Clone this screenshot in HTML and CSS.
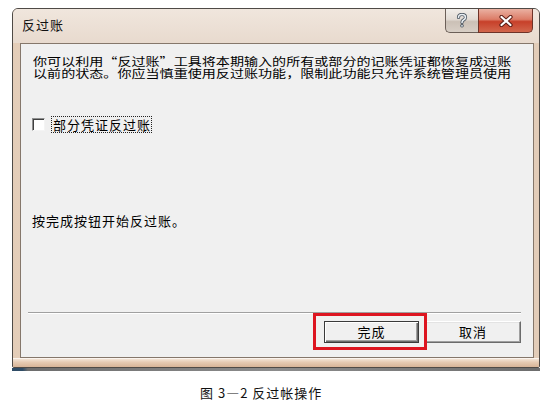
FILE: index.html
```html
<!DOCTYPE html>
<html lang="zh-CN">
<head>
<meta charset="utf-8">
<title>反过账</title>
<link rel="stylesheet" href="styles.css">
</head>
<body>
<div class="window">
  <div class="titlebar">
    <span class="title">反过账</span>
    <div class="caption-buttons">
      <div class="cbtn help">
        <svg width="12" height="15" viewBox="0 0 12 15" aria-hidden="true">
          <path d="M2.5 4.5 Q2.5 1.5 6 1.5 Q9.5 1.5 9.5 4.3 Q9.5 6 7.5 7 Q6 7.8 6 9.5" fill="none" stroke="#4a5560" stroke-width="3.2" stroke-linecap="round"/>
          <path d="M2.5 4.5 Q2.5 1.5 6 1.5 Q9.5 1.5 9.5 4.3 Q9.5 6 7.5 7 Q6 7.8 6 9.5" fill="none" stroke="#e9eef2" stroke-width="1.6" stroke-linecap="round"/>
          <circle cx="6" cy="12.8" r="1.8" fill="#4a5560"/>
          <circle cx="6" cy="12.8" r="0.9" fill="#e9eef2"/>
        </svg>
      </div>
      <div class="cbtn close">
        <svg width="14" height="12" viewBox="0 0 14 12" aria-hidden="true">
          <path d="M2.5 2 L11.5 10 M11.5 2 L2.5 10" stroke="#5a1c14" stroke-width="4.2" stroke-linecap="round"/>
          <path d="M2.5 2 L11.5 10 M11.5 2 L2.5 10" stroke="#ffffff" stroke-width="2.2" stroke-linecap="round"/>
        </svg>
      </div>
    </div>
  </div>
  <div class="client">
    <div class="intro">
      <div class="line">你可以利用<span class="q ql">“</span>反过账<span class="q qr">”</span>工具将本期输入的所有或部分的记账凭证都恢复成过账</div>
      <div class="line">以前的状态。你应当慎重使用反过账功能，限制此功能只允许系统管理员使用</div>
    </div>
    <div class="check-row">
      <span class="box"></span>
      <span class="focus">部分凭证反过账</span>
    </div>
    <p class="hint">按完成按钮开始反过账。</p>
    <div class="sep"></div>
    <div class="actions">
      <button class="btn default">完成</button>
      <button class="btn">取消</button>
      <div class="highlight"></div>
    </div>
  </div>
  <div class="bottom-frame"></div>
</div>
<div class="desk"></div>
<p class="fig">图 3—2 反过帐操作</p>
</body>
</html>
```
FILE: styles.css
```css
html, body {
  margin: 0;
  padding: 0;
  background: #ffffff;
}
body {
  width: 546px;
  height: 403px;
  overflow: hidden;
  font-family: "Noto Sans CJK SC", "Noto Sans", sans-serif;
  color: #000;
}
.window {
  box-sizing: border-box;
  margin: 8px 0 0 12px;
  width: 528px;
  height: 360px;
  border: 1px solid #4f4a46;
  border-radius: 6px 6px 2px 2px;
  background: linear-gradient(to right, #e4cdb8 0%, #e9d9ca 40%, #ebdfd3 70%, #e2ccb8 100%);
  display: flex;
  flex-direction: column;
}
.titlebar {
  height: 34px;
  display: flex;
  justify-content: space-between;
  align-items: flex-start;
  background: linear-gradient(to bottom, #f0e6dd 0%, #e8dace 100%);
  border-radius: 5px 5px 0 0;
}
.title {
  padding-left: 9px;
  line-height: 32px;
  font-size: 13px;
  letter-spacing: 1px;
  color: #111;
}
.caption-buttons {
  display: flex;
  margin-right: 6px;
}
.cbtn {
  box-sizing: border-box;
  height: 24px;
  display: flex;
  align-items: center;
  justify-content: center;
  border: 1px solid #6b5f58;
  border-top: none;
}
.help {
  width: 33px;
  border-radius: 0 0 0 5px;
  background: linear-gradient(to bottom, #f1ede9 0%, #e2dbd4 45%, #cbc0b6 55%, #d8cfc6 100%);
  border-right: none;
}
.close {
  width: 55px;
  border-radius: 0 0 5px 0;
  background: linear-gradient(to bottom, #eab1a2 0%, #dc7c67 45%, #c7402a 55%, #d2664c 100%);
  border-color: #6e3328;
}
.client {
  box-sizing: border-box;
  margin: 0 5px 0 7px;
  height: 315px;
  border: 1px solid #85776b;
  background: #f0f0f0;
  font-size: 13px;
  letter-spacing: 1px;
  overflow: hidden;
}
.intro {
  margin-top: 11px;
  padding-left: 12px;
}
.line {
  width: max-content;
  height: 12px;
  font-size: 11.5px;
  line-height: 12px;
  letter-spacing: 0;
  white-space: nowrap;
  transform: scaleX(1.223);
  transform-origin: 0 0;
}
.q {
  display: inline-block;
  width: 1em;
}
.ql {
  text-align: right;
}
.qr {
  text-align: left;
}
.check-row {
  margin-top: 37px;
  height: 17px;
  display: flex;
  align-items: center;
  padding-left: 11px;
}
.box {
  box-sizing: border-box;
  width: 13px;
  height: 13px;
  background: #fff;
  border: 1px solid;
  border-color: #8e8f8f #f4f4f4 #f4f4f4 #8e8f8f;
  box-shadow: inset 1px 1px 0 #404040;
  margin-right: 6px;
}
.focus {
  box-sizing: border-box;
  height: 17px;
  line-height: 15px;
  padding: 0 0 0 1px;
  border: 1px dotted #222;
}
.hint {
  margin: 81px 0 0 0;
  padding-left: 11px;
  line-height: 14px;
}
.sep {
  margin: 84px 12px 0 7px;
  border-top: 1px solid #a0a0a0;
  border-bottom: 1px solid #ffffff;
}
.actions {
  position: relative;
  margin-top: 7px;
  display: flex;
  justify-content: flex-end;
  gap: 6px;
  padding-right: 12px;
}
.btn {
  box-sizing: border-box;
  width: 95px;
  height: 22px;
  padding: 0;
  font-family: inherit;
  font-size: 13px;
  letter-spacing: 1px;
  color: #000;
  background: #f0f0f0;
  border: 1px solid;
  border-color: #ffffff #6b6b6b #6b6b6b #ffffff;
  box-shadow: inset -1px -1px 0 #a0a0a0, inset 1px 1px 0 #e3e3e3;
  line-height: 18px;
}
.btn + .btn {
  width: 96px;
}
.btn.default {
  border-color: #3a3a3a;
  box-shadow: inset 1px 1px 0 #ffffff, inset -1px -1px 0 #6b6b6b, inset -2px -2px 0 #a0a0a0;
}
.highlight {
  position: absolute;
  left: 292px;
  top: -8px;
  width: 114px;
  height: 37px;
  box-sizing: border-box;
  border: 3px solid #dd1520;
}
.bottom-frame {
  flex: 1;
  background: linear-gradient(to bottom, #f3e4d6 0%, #e6cbb3 40%, #d7b497 100%);
  border-top: 1px solid #fbf4ee;
}
.desk {
  margin-left: 12px;
  width: 528px;
  height: 3px;
  background: linear-gradient(to right, #2f4c66 0%, #2f4c66 2%, #6d6d6d 3%, #8c8c8c 50%, #6d6d6d 100%);
}
.fig {
  margin: 14px 0 0 200px;
  font-size: 13px;
  line-height: 15px;
  letter-spacing: 1px;
  color: #111;
}
```
